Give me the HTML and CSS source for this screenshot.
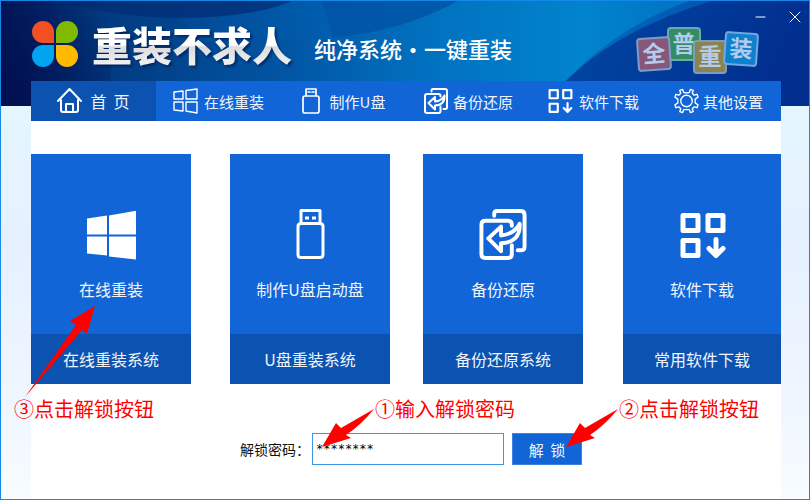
FILE: index.html
```html
<!DOCTYPE html>
<html lang="zh-CN">
<head>
    <meta charset="UTF-8" />
    <meta name="viewport" content="width=device-width, initial-scale=1.0"/>
    <title>重装不求人</title>
    <link rel="stylesheet" href="styles.css">
</head>
<body>
<div class="window">
    <!-- header backdrop -->
    <svg class="backdrop" viewBox="0 0 810 106" preserveAspectRatio="none" aria-hidden="true">
        <defs>
            <linearGradient id="sky" x1="0" y1="0" x2="1" y2="0">
                <stop offset="0" stop-color="#012468"/>
                <stop offset="0.12" stop-color="#01397f"/>
                <stop offset="0.38" stop-color="#0159a8"/>
                <stop offset="0.52" stop-color="#0170be"/>
                <stop offset="0.72" stop-color="#0184cd"/>
                <stop offset="1" stop-color="#0160b4"/>
            </linearGradient>
            <linearGradient id="band" x1="0" y1="0" x2="1" y2="0">
                <stop offset="0" stop-color="#014c9c"/>
                <stop offset="1" stop-color="#0160b2"/>
            </linearGradient>
            <linearGradient id="wing" x1="0" y1="0" x2="1" y2="0.3">
                <stop offset="0" stop-color="#0179c6"/>
                <stop offset="0.4" stop-color="#0155b0"/>
                <stop offset="1" stop-color="#01308f"/>
            </linearGradient>
            <linearGradient id="fold" x1="0" y1="0" x2="1" y2="0.2">
                <stop offset="0" stop-color="#013f9c"/>
                <stop offset="1" stop-color="#012a8c"/>
            </linearGradient>
            <linearGradient id="corner" x1="0" y1="0.7" x2="1" y2="0.2">
                <stop offset="0" stop-color="#011050"/>
                <stop offset="1" stop-color="#011050" stop-opacity="0"/>
            </linearGradient>
        </defs>
        <rect width="810" height="106" fill="url(#sky)"/>
        <path d="M322 0H458C425 18 385 32 333 37Z" fill="#0152a4" opacity="0.8"/>
        <path d="M180 17C220 17 262 10 292 0H322L333 37C290 40 240 38 200 40Z" fill="url(#band)" opacity="0.5"/>
        <path d="M60 0H292C262 12 225 17 180 17C130 17 90 10 60 0Z" fill="#012c74" opacity="0.7"/>
        <path d="M625 0H810V106H545L566 81C600 45 640 18 690 0Z" fill="url(#wing)" opacity="0.7"/>
        <path d="M566 81C600 48 640 24 700 4L712 0H810V106H545Z" fill="url(#fold)" opacity="0.8"/>
        <rect width="110" height="106" fill="url(#corner)"/>
    </svg>

    <header class="header">
        <svg class="logo" viewBox="0 0 46 46" aria-hidden="true">
            <path d="M22 22H11A11 11 0 1 1 22 11Z" fill="#f25022"/>
            <path d="M24 22V11A11 11 0 1 1 35 22Z" fill="#7fba00"/>
            <path d="M22 24V35A11 11 0 1 1 11 24Z" fill="#00a4ef"/>
            <path d="M24 24H35A11 11 0 1 1 24 35Z" fill="#ffb900"/>
        </svg>
        <h1 class="title">重装不求人</h1>
        <p class="slogan">纯净系统·一键重装</p>
        <svg class="badge" viewBox="0 0 124 50" role="img" aria-label="全普重装">
            <g transform="translate(48 19)">
                <rect x="-16" y="-16" width="32" height="32" rx="3" fill="#348d62" stroke="#6ba9b2" stroke-width="2"/>
                <text y="8">普</text>
            </g>
            <g transform="translate(18 29) rotate(-4)">
                <rect x="-16" y="-16" width="32" height="32" rx="3" fill="#855879" stroke="#7d9cc9" stroke-width="2"/>
                <text y="8">全</text>
            </g>
            <g transform="translate(74 32)">
                <rect x="-16" y="-16" width="32" height="32" rx="3" fill="#8a8450" stroke="#7d9cb9" stroke-width="2"/>
                <text y="8">重</text>
            </g>
            <g transform="translate(105 24) rotate(4)">
                <rect x="-16" y="-16" width="32" height="32" rx="3" fill="#0d80d0" stroke="#74a6df" stroke-width="2"/>
                <text y="8">装</text>
            </g>
        </svg>
        <div class="controls">
            <button type="button" aria-label="最小化">
                <svg viewBox="0 0 12 12"><path d="M1 6H10"/></svg>
            </button>
            <button type="button" aria-label="关闭">
                <svg viewBox="0 0 12 12"><path d="M1 1L11 11M11 1L1 11"/></svg>
            </button>
        </div>
    </header>

    <main class="panel">
        <nav class="nav">
            <a class="active" href="#home">
                <svg class="icon" viewBox="0 0 25 26"><path d="M1 13L12.500 1L24 13M4 12V22Q4 24 6 24H19Q21 24 21 22V12M9 24V16H16V24"/></svg>
                <span>首&nbsp; 页</span>
            </a>
            <a href="#install">
                <svg class="icon" viewBox="0 0 25 26"><path stroke-width="1.400" d="M1 4L10 3V11H1ZM13 2.500L24 1V11H13ZM1 14H10V23L1 22ZM13 14H24V25L13 23Z"/></svg>
                <span>在线重装</span>
            </a>
            <a class="wide" href="#usb">
                <svg class="icon narrow" viewBox="0 0 18 26"><path stroke-width="1.700" d="M4 8V1H14V8M3 8H15Q17 8 17 10V23Q17 25 15 25H3Q1 25 1 23V10Q1 8 3 8ZM6 4H8M10 4H12"/></svg>
                <span>制作U盘</span>
            </a>
            <a class="tight" href="#backup">
                <svg class="icon" viewBox="0 0 50 52"><use href="#restore"/></svg>
                <span>备份还原</span>
            </a>
            <a href="#software">
                <svg class="icon" viewBox="0 0 46 46"><use href="#apps"/></svg>
                <span>软件下载</span>
            </a>
            <a class="tight" href="#settings">
                <svg class="icon" viewBox="0 0 26 26">
                    <path stroke-width="1.400" d="M10 4L9 1L6 2L7 5L5 7L2 6L1 9L4 11V15L1 17L2 20L5 19L7 21L6 24L9 25L10 22H16L17 25L20 24L19 21L21 19L24 20L25 17L22 15V11L25 9L24 6L21 7L19 5L20 2L17 1L16 4Q13 5 10 4Z"/>
                    <circle cx="13" cy="13" r="6" stroke-width="1.400"/>
                </svg>
                <span>其他设置</span>
            </a>
        </nav>

        <section class="cards">
            <a class="card" href="#install">
                <span class="card-body">
                    <svg class="card-icon" viewBox="-1 -1 50 50">
                        <path class="solid" d="M0 8L20 5V24H0ZM22 5L50 0V24H22ZM0 26H20V45L0 43ZM22 26H50V49L22 46Z"/>
                    </svg>
                    <span>在线重装</span>
                </span>
                <span class="card-foot">在线重装系统</span>
            </a>
            <a class="card" href="#usb">
                <span class="card-body">
                    <svg class="card-icon" viewBox="-1 0 50 50">
                        <path class="thin" d="M15 13V1H34V13M15 14H34Q37 14 37 17V45Q37 48 34 48H15Q12 48 12 45V17Q12 14 15 14Z"/>
                        <path class="solid" d="M19 7H23V10H19ZM26 7H30V10H26Z"/>
                    </svg>
                    <span>制作U盘启动盘</span>
                </span>
                <span class="card-foot">U盘重装系统</span>
            </a>
            <a class="card" href="#backup">
                <span class="card-body">
                    <svg class="card-icon" viewBox="-1 0 50 52">
                        <g id="restore">
                            <path d="M15 7V5Q15 2 18 2H42Q46 2 46 6V38Q46 42 43 42H39"/>
                            <path d="M33 17V16Q33 12 29 12H6Q2 12 2 16V46Q2 50 6 50H29Q33 50 33 46V37"/>
                            <path d="M9 30L22 18V27Q35 26 41 15Q42 34 22 35V43Z"/>
                        </g>
                    </svg>
                    <span>备份还原</span>
                </span>
                <span class="card-foot">备份还原系统</span>
            </a>
            <a class="card" href="#software">
                <span class="card-body">
                    <svg class="card-icon bold" viewBox="-3 -3 50 50">
                        <g id="apps">
                            <path d="M3 3H18V18H3ZM28 3H43V18H28ZM3 28H18V43H3Z"/>
                            <path d="M36 27V42M29 36L36 43L43 36"/>
                        </g>
                    </svg>
                    <span>软件下载</span>
                </span>
                <span class="card-foot">常用软件下载</span>
            </a>
        </section>

        <form class="unlock">
            <label for="password">解锁密码：</label>
            <input id="password" type="text" value="********" autocomplete="off">
            <button type="button">解&nbsp; 锁</button>
        </form>
    </main>

    <!-- step hints -->
    <div class="hint hint-input">
        <svg viewBox="0 0 54 40"><path d="M53 1L20 20L15 15L1 39L30 30L25 27Q40 17 53 1Z"/></svg>
        <span>①输入解锁密码</span>
    </div>
    <div class="hint hint-button">
        <svg viewBox="0 0 54 40"><path d="M53 1L20 20L15 15L1 39L30 30L25 27Q40 17 53 1Z"/></svg>
        <span>②点击解锁按钮</span>
    </div>
    <div class="hint hint-card">
        <svg viewBox="0 0 72 92"><path d="M1 91L52 19L46 15L71 0L63 28L58 24Z"/></svg>
        <span>③点击解锁按钮</span>
    </div>
</div>
</body>
</html>
```
FILE: styles.css
```css
* {
    box-sizing: border-box;
}

body {
    margin: 0;
    font-family: "Noto Sans CJK SC", sans-serif;
    font-size: 16px;
    color: #111;
}

a {
    color: inherit;
    text-decoration: none;
}

svg {
    display: block;
    fill: none;
    stroke: #fff;
    stroke-width: 2;
    stroke-linejoin: round;
    stroke-linecap: round;
}

.window {
    position: relative;
    display: flex;
    flex-direction: column;
    min-height: 100vh;
    padding: 0 28px 0 30px;
    border: 1px solid #1688e8;
    background: linear-gradient(#e4f6ff 20%, #e6f0ff 50%, #eff6ff 80%, #f8fcff);
}

.backdrop {
    position: absolute;
    top: 0;
    left: 0;
    width: 100%;
    height: 105px;
    stroke: none;
}

/* Header */
.header {
    position: relative;
    display: flex;
    align-items: center;
    height: 80px;
    padding: 6px 21px 0 1px;
}

.logo {
    width: 46px;
    height: 46px;
    stroke: none;
}

.title {
    margin: 0 0 0 14px;
    font-size: 40px;
    line-height: 48px;
    font-weight: 900;
    white-space: nowrap;
    color: transparent;
    background: linear-gradient(#fff 52%, #dcdcdc 56%, #f4f4f4);
    background-clip: text;
    -webkit-background-clip: text;
    filter: drop-shadow(2px 2px 1px rgba(0, 20, 70, 0.6));
}

.slogan {
    margin: 8px 0 0 22px;
    font-size: 22px;
    line-height: 30px;
    font-weight: 500;
    white-space: nowrap;
    color: #fff;
}

.badge {
    width: 124px;
    height: 50px;
    margin-left: auto;
    margin-top: 12px;
}

.badge text {
    font-size: 23px;
    font-weight: 700;
    text-anchor: middle;
    fill: #b5cbea;
    stroke: none;
}

.controls {
    position: absolute;
    top: 4px;
    right: -26px;
    display: flex;
    gap: 10px;
}

.controls button {
    padding: 6px;
    border: 0;
    background: none;
    cursor: pointer;
}

.controls svg {
    width: 12px;
    height: 12px;
    stroke-width: 1;
}

/* Main panel */
.panel {
    position: relative;
    flex: 1;
    background: #fff;
}

.nav {
    display: grid;
    grid-template-columns: repeat(6, 1fr);
    height: 40px;
    background: #1165d6;
}

.nav a {
    display: flex;
    align-items: center;
    justify-content: center;
    gap: 6px;
    font-size: 15px;
    color: #f0f5fd;
    white-space: nowrap;
}

.nav a.active {
    gap: 8px;
    background: #0b52b1;
    font-size: 16px;
}

.nav a.wide {
    gap: 10px;
}

.nav a.tight {
    gap: 4px;
}

.icon {
    width: 25px;
    height: 26px;
}

.icon.narrow {
    width: 18px;
}

.icon use {
    stroke-width: 4;
}

.cards {
    display: grid;
    grid-template-columns: 199fr 193fr 200fr 158fr;
    margin-top: 33px;
}

.card {
    display: block;
    max-width: 160px;
    background: #1165d6;
    color: #f0f5fd;
    text-align: center;
}

.card-body {
    display: flex;
    flex-direction: column;
    align-items: center;
    gap: 17px;
    height: 180px;
    padding-top: 55px;
    line-height: 24px;
}

.card-icon {
    width: 50px;
    height: 51px;
    stroke-width: 4;
}

.card-icon.bold {
    stroke-width: 5;
}

.card-icon .solid {
    fill: #fff;
    stroke: none;
}

.card-icon .thin {
    stroke-width: 3;
}

.card-foot {
    display: block;
    height: 50px;
    line-height: 50px;
    background: #0b52b1;
}

/* Unlock form */
.unlock {
    display: flex;
    align-items: center;
    justify-content: center;
    margin-top: 49px;
    padding-left: 10px;
    font-size: 14px;
}

.unlock label {
    margin-right: 2px;
}

.unlock input {
    width: 192px;
    height: 32px;
    padding: 0 3px;
    border: 1px solid #3c95e6;
    background: #fff;
    font: 12px "DejaVu Sans Mono", monospace;
    color: #000;
}

.unlock button {
    width: 70px;
    height: 32px;
    margin-left: 8px;
    padding: 0;
    border: 1px solid #3c84e0;
    background: #1165d6;
    font-family: inherit;
    font-size: 15px;
    color: #f0f5fd;
    cursor: pointer;
}

/* Red hints lie over the window content */
.hint {
    position: absolute;
    font-size: 20px;
    line-height: 24px;
    color: #f00;
    white-space: nowrap;
    pointer-events: none;
}

.hint svg {
    position: absolute;
    width: 54px;
    height: 40px;
    right: 100%;
    top: 11px;
    fill: #f00;
    stroke: none;
}

.hint-input {
    top: 396px;
    left: 374px;
}

.hint-button {
    top: 396px;
    left: 618px;
}

.hint-card {
    top: 396px;
    left: 13px;
}

.hint-card svg {
    width: 72px;
    height: 92px;
    left: 10px;
    right: auto;
    top: -91px;
}
```
